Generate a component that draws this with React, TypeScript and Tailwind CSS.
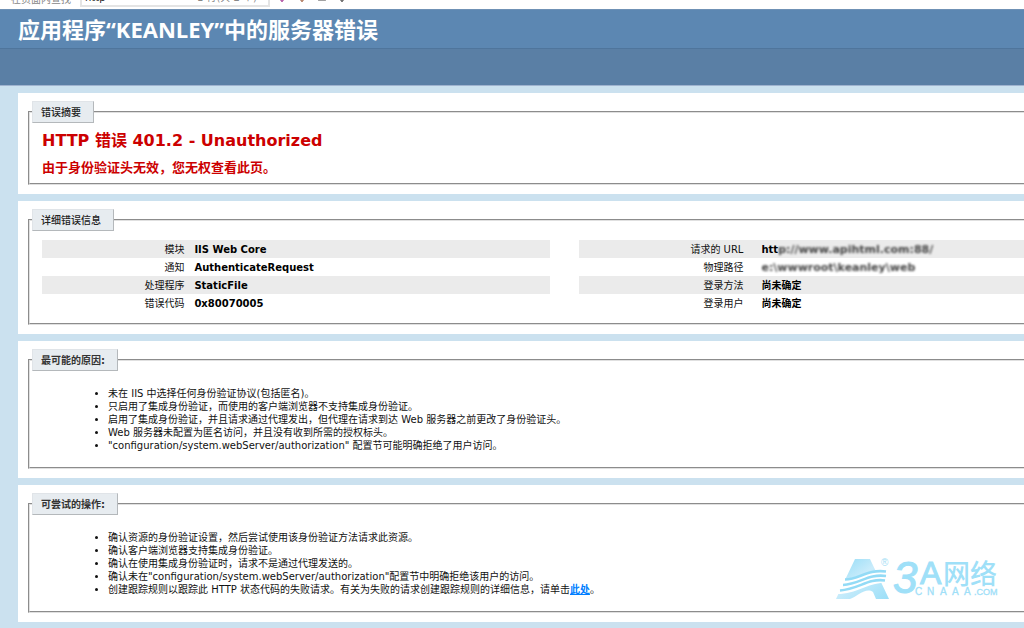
import type { ReactNode } from "react";
import { ArrowDown, Minus } from "lucide-react";

type Row = { label: string; value: string; masked?: string };

const requestRows: Row[] = [
  { label: "模块", value: "IIS Web Core" },
  { label: "通知", value: "AuthenticateRequest" },
  { label: "处理程序", value: "StaticFile" },
  { label: "错误代码", value: "0x80070005" },
];

const userRows: Row[] = [
  { label: "请求的 URL", value: "htt", masked: "p://www.apihtml.com:88/" },
  { label: "物理路径", value: "", masked: "e:\\wwwroot\\keanley\\web" },
  { label: "登录方法", value: "尚未确定" },
  { label: "登录用户", value: "尚未确定" },
];

const causes = [
  "未在 IIS 中选择任何身份验证协议(包括匿名)。",
  "只启用了集成身份验证，而使用的客户端浏览器不支持集成身份验证。",
  "启用了集成身份验证，并且请求通过代理发出，但代理在请求到达 Web 服务器之前更改了身份验证头。",
  "Web 服务器未配置为匿名访问，并且没有收到所需的授权标头。",
  "\"configuration/system.webServer/authorization\" 配置节可能明确拒绝了用户访问。",
];

const actions: ReactNode[] = [
  "确认资源的身份验证设置，然后尝试使用该身份验证方法请求此资源。",
  "确认客户端浏览器支持集成身份验证。",
  "确认在使用集成身份验证时，请求不是通过代理发送的。",
  "确认未在\"configuration/system.webServer/authorization\"配置节中明确拒绝该用户的访问。",
  <>
    创建跟踪规则以跟踪此 HTTP 状态代码的失败请求。有关为失败的请求创建跟踪规则的详细信息，请单击
    <a href="#trace" className="font-bold text-[#007eff] underline">
      此处
    </a>
    。
  </>,
];

function Section({ title, bold, children }: { title: string; bold?: boolean; children: ReactNode }) {
  return (
    <section className="bg-white pt-2 pb-[9px] pl-[10px]">
      <fieldset className="min-w-0 border-2 border-r-0 border-[#e0e0e0] [border-style:groove]">
        <legend
          className={`ml-0.5 h-[22px] border border-t-[#e0e4e8] border-r-[#b4b8bb] border-b-[#b4b8bb] border-l-[#e0e4e8] bg-[#e7ecf0] pr-3 pl-2 text-[10px] leading-[21px] ${
            bold ? "font-bold text-[#333]" : "font-medium text-[#222]"
          }`}
        >
          {title}
        </legend>
        {children}
      </fieldset>
    </section>
  );
}

function DetailTable({ rows, labelClass }: { rows: Row[]; labelClass: string }) {
  return (
    <table className="w-full table-fixed border-collapse">
      <tbody>
        {rows.map((row) => (
          <tr key={row.label} className="h-[18px] text-[10px] leading-[17px] odd:bg-[#ebebeb]">
            <th scope="row" className={`pt-px text-right font-normal ${labelClass}`}>
              {row.label}
            </th>
            <td className="pt-px font-bold whitespace-nowrap text-black">
              {row.value}
              {row.masked && <span className="inline-block text-[11px] text-[#444] blur-[1px]">{row.masked}</span>}
            </td>
          </tr>
        ))}
      </tbody>
    </table>
  );
}

function BulletList({ items }: { items: ReactNode[] }) {
  return (
    <ul className="list-disc pt-4 pb-[15px] pl-[78px] text-[10px] leading-[13px] text-[#111]">
      {items.map((item, i) => (
        <li key={i}>{item}</li>
      ))}
    </ul>
  );
}

function Watermark() {
  return (
    <div className="absolute right-[22px] bottom-[20px]">
      <svg width="166" height="46" viewBox="0 0 166 46" role="img" aria-label="3A网络 CNAAA.COM">
        <defs>
          <linearGradient id="mark" x1="0" y1="0" x2="1" y2="1">
            <stop offset="0" stopColor="#8ddaf6" />
            <stop offset="0.45" stopColor="#c9ecfb" />
            <stop offset="1" stopColor="#9bdff8" />
          </linearGradient>
        </defs>
        <path d="M19 3H34L53 43H40L37 36C30 31 22 40 14 43H0L9 24Z" fill="url(#mark)" />
        <path d="M8 23C24 22 32 12 50 15V27C32 26 22 38 1 38Z" fill="#fff" />
        <g fill="none" stroke="#93dbf6" strokeWidth="2.600">
          <path d="M9 23.500C24 23 31 13 50 15.500" />
          <path d="M7 29C24 28 32 17.500 50 20" />
          <path d="M4 34.500C23 33 32 22 49 24.500" />
        </g>
        <text x="45" y="10" fontSize="10" fill="#a5def5" fontFamily="Liberation Sans, sans-serif">
          ®
        </text>
        <g fill="#9fe0f8" fontFamily="Liberation Sans, Noto Sans CJK SC, sans-serif">
          <text x="57" y="37" fontSize="44" fontStyle="italic" stroke="#9fe0f8" strokeWidth="1">
            3
          </text>
          <text x="84" y="28" fontSize="32" stroke="#9fe0f8" strokeWidth="1">
            A
          </text>
          <text x="107" y="28" fontSize="27" fontWeight="500">
            网络
          </text>
          <g fontSize="10" stroke="#9fe0f8" strokeWidth="0.300">
            <text x="79" y="39">C</text>
            <text x="91" y="39">N</text>
            <text x="104" y="39">A</text>
            <text x="116" y="39">A</text>
            <text x="128" y="39">A</text>
            <text x="138" y="39" fontSize="9">
              .COM
            </text>
          </g>
        </g>
      </svg>
    </div>
  );
}

export default function App() {
  return (
    <div className="min-h-screen overflow-hidden bg-[#cbe1ef] font-['DejaVu_Sans','Noto_Sans_CJK_SC',sans-serif] text-[#111]">
      <div className="flex h-[9px] items-end overflow-hidden bg-white pl-[11px] text-[10px] leading-[14px] text-[#888]">
        <label htmlFor="find" className="mb-0.5">
          在页面内查找
        </label>
        <div className="mb-0.5 ml-[9px] flex w-[190px] items-end border-2 border-[#e4e4e4] px-[3px]">
          <input id="find" defaultValue="http" className="h-[14px] w-[110px] text-[#222] outline-none" />
          <span className="mr-2 ml-auto whitespace-nowrap">1 行(共 2 个)</span>
        </div>
        <div className="mb-[5px] ml-[6px] flex gap-2 text-[#444]">
          <button aria-label="上一个">
            <ArrowDown size={12} className="text-[#a03090]" />
          </button>
          <button aria-label="下一个">
            <ArrowDown size={12} className="text-[#a06040]" />
          </button>
          <button aria-label="选项" className="-mb-1">
            <Minus size={12} />
          </button>
          <button aria-label="关闭">
            <ArrowDown size={12} />
          </button>
        </div>
      </div>

      <header>
        <h1 className="h-10 border-t border-b border-t-[#6f91b5] border-b-[#4f759c] bg-[#5c87b2] pl-[18px] font-['Open_Sans','Noto_Sans_CJK_SC',sans-serif] text-[22px] leading-[38px] font-bold whitespace-nowrap text-white">
          应用程序“KEANLEY”中的服务器错误
        </h1>
        <div className="h-[37px] border-b border-[#9fb3cf] bg-[#5a7fa5]" />
      </header>

      <main className="flex flex-col gap-[7px] pt-[7px] pb-[5px] pl-[18px]">
        <Section title="错误摘要">
          <div className="pt-[9px] pb-[5px] pl-3 font-bold text-[#cc0000]">
            <h2 className="text-[16px] leading-[18px]">HTTP 错误 401.2 - Unauthorized</h2>
            <h3 className="mt-2 text-[13px] leading-[20px]">由于身份验证头无效，您无权查看此页。</h3>
          </div>
        </Section>

        <Section title="详细错误信息">
          <div className="grid grid-cols-[508fr_445fr] gap-x-[29px] pt-[9px] pb-[11px] pl-3">
            <DetailTable rows={requestRows} labelClass="w-[30%] pr-[10px]" />
            <DetailTable rows={userRows} labelClass="w-[41%] pr-[18px]" />
          </div>
        </Section>

        <Section title="最可能的原因:" bold>
          <BulletList items={causes} />
        </Section>

        <div className="relative">
          <Section title="可尝试的操作:" bold>
            <BulletList items={actions} />
          </Section>
          <Watermark />
        </div>
      </main>
    </div>
  );
}
